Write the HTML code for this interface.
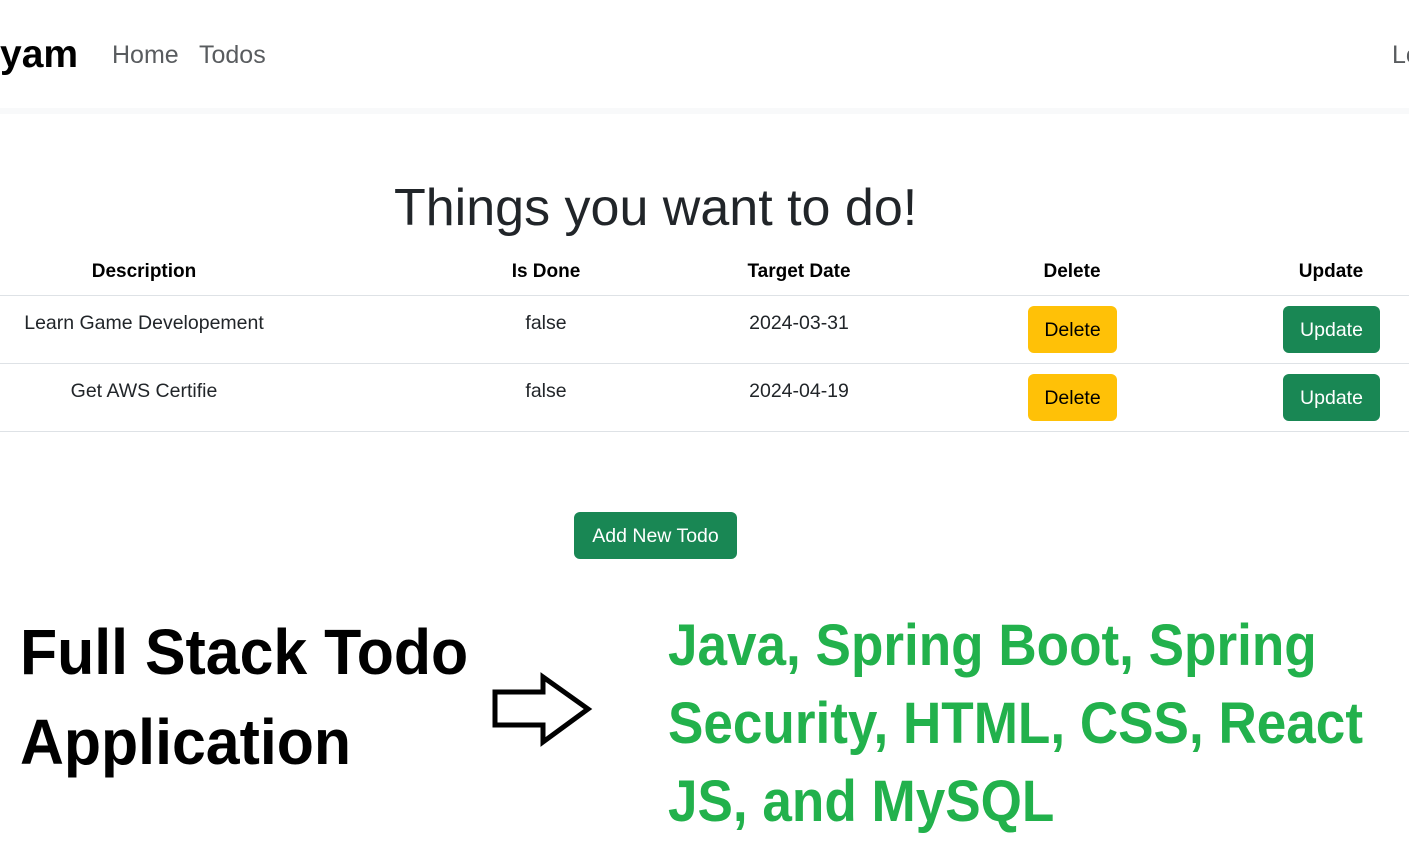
<!DOCTYPE html>
<html><head><style>
body{margin:0;width:1409px;height:848px;overflow:hidden;background:#fff;font-family:"Liberation Sans",sans-serif;position:relative}
.a{position:absolute;white-space:nowrap}
.th{position:absolute;top:261px;font-weight:bold;font-size:19px;color:#000;transform:translateX(-50%);white-space:nowrap}
.td{position:absolute;font-size:19.5px;color:#212529;transform:translateX(-50%);white-space:nowrap}
.line{position:absolute;left:0;width:1409px;height:1px;background:#dee2e6}
.btn{position:absolute;border-radius:6px;font-size:19.5px;text-align:center;line-height:48px;height:47px}
.del{background:#ffc107;color:#000;width:89px;left:1028px}
.up{background:#198754;color:#fff;width:97px;left:1283px}
.big{position:absolute;font-weight:bold;white-space:nowrap;transform-origin:0 0}
</style></head><body>
<div class="a" style="left:0;top:33px;font-size:39px;font-weight:bold;color:#000">yam</div>
<div class="a" style="left:112px;top:41px;font-size:25px;color:#595c5f">Home</div>
<div class="a" style="left:199px;top:41px;font-size:25px;color:#595c5f">Todos</div>
<div class="a" style="left:1392px;top:41px;font-size:25px;color:#595c5f">Lo</div>
<div style="position:absolute;left:0;top:108px;width:1409px;height:6px;background:#f8f9fa"></div>
<div class="a" style="left:394px;top:178px;font-size:52px;color:#212529">Things you want to do!</div>
<div class="th" style="left:144px">Description</div>
<div class="th" style="left:546px">Is Done</div>
<div class="th" style="left:799px">Target Date</div>
<div class="th" style="left:1072px">Delete</div>
<div class="th" style="left:1331px">Update</div>
<div class="line" style="top:295px"></div>
<div class="td" style="left:144px;top:312px">Learn Game Developement</div>
<div class="td" style="left:546px;top:312px">false</div>
<div class="td" style="left:799px;top:312px">2024-03-31</div>
<div class="btn del" style="top:306px">Delete</div>
<div class="btn up" style="top:306px">Update</div>
<div class="line" style="top:363px"></div>
<div class="td" style="left:144px;top:380px">Get AWS Certifie</div>
<div class="td" style="left:546px;top:380px">false</div>
<div class="td" style="left:799px;top:380px">2024-04-19</div>
<div class="btn del" style="top:374px">Delete</div>
<div class="btn up" style="top:374px">Update</div>
<div class="line" style="top:431px"></div>
<div class="btn" style="left:574px;top:512px;width:163px;background:#198754;color:#fff">Add New Todo</div>
<div class="big" style="left:20px;top:615px;font-size:64px;color:#000;transform:scaleX(0.95)">Full Stack Todo</div>
<div class="big" style="left:20px;top:705px;font-size:64px;color:#000;transform:scaleX(0.95)">Application</div>
<svg class="a" style="left:490px;top:672px" width="104" height="76"><path d="M5 20H53V5L98 37L53 70V53H5Z" fill="none" stroke="#000" stroke-width="5" stroke-linejoin="miter"/></svg>
<div class="big" style="left:668px;top:612px;font-size:58px;color:#22b14c;transform:scaleX(0.915)">Java, Spring Boot, Spring</div>
<div class="big" style="left:668px;top:690px;font-size:58px;color:#22b14c;transform:scaleX(0.915)">Security, HTML, CSS, React</div>
<div class="big" style="left:668px;top:768px;font-size:58px;color:#22b14c;transform:scaleX(0.915)">JS, and MySQL</div>
</body></html>
